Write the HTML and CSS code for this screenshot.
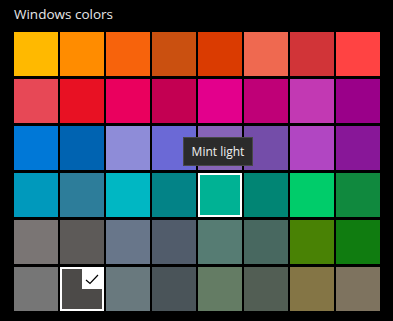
FILE: index.html
```html
<!DOCTYPE html>
<html lang="en">
<head>
<meta charset="UTF-8" />
<title>Windows colors</title>
<link rel="stylesheet" href="styles.css">
</head>
<body>
  <div class="panel">
    <h2 class="title">Windows colors</h2>
    <div class="swatches">
      <div class="swatch" style="background:#FFB900"></div>
      <div class="swatch" style="background:#FF8C00"></div>
      <div class="swatch" style="background:#F7630C"></div>
      <div class="swatch" style="background:#CA5010"></div>
      <div class="swatch" style="background:#DA3B01"></div>
      <div class="swatch" style="background:#EF6950"></div>
      <div class="swatch" style="background:#D13438"></div>
      <div class="swatch" style="background:#FF4343"></div>

      <div class="swatch" style="background:#E74856"></div>
      <div class="swatch" style="background:#E81123"></div>
      <div class="swatch" style="background:#EA005E"></div>
      <div class="swatch" style="background:#C30052"></div>
      <div class="swatch" style="background:#E3008C"></div>
      <div class="swatch" style="background:#BF0077"></div>
      <div class="swatch" style="background:#C239B3"></div>
      <div class="swatch" style="background:#9A0089"></div>

      <div class="swatch" style="background:#0078D7"></div>
      <div class="swatch" style="background:#0063B1"></div>
      <div class="swatch" style="background:#8E8CD8"></div>
      <div class="swatch" style="background:#6B69D6"></div>
      <div class="swatch" style="background:#8764B8"></div>
      <div class="swatch" style="background:#744DA9"></div>
      <div class="swatch" style="background:#B146C2"></div>
      <div class="swatch" style="background:#881798"></div>

      <div class="swatch" style="background:#0099BC"></div>
      <div class="swatch" style="background:#2D7D9A"></div>
      <div class="swatch" style="background:#00B7C3"></div>
      <div class="swatch" style="background:#038387"></div>
      <div class="swatch hovered" style="background:#00B294">
        <div class="tooltip">Mint light</div>
      </div>
      <div class="swatch" style="background:#018574"></div>
      <div class="swatch" style="background:#00CC6A"></div>
      <div class="swatch" style="background:#10893E"></div>

      <div class="swatch" style="background:#7A7574"></div>
      <div class="swatch" style="background:#5D5A58"></div>
      <div class="swatch" style="background:#68768A"></div>
      <div class="swatch" style="background:#515C6B"></div>
      <div class="swatch" style="background:#567C73"></div>
      <div class="swatch" style="background:#486860"></div>
      <div class="swatch" style="background:#498205"></div>
      <div class="swatch" style="background:#107C10"></div>

      <div class="swatch" style="background:#767676"></div>
      <div class="swatch selected" style="background:#4C4A48">
        <span class="check">
          <svg width="20" height="20" viewBox="0 0 20 20"><path d="M4 11 L8 14.5 L16 6" fill="none" stroke="#000" stroke-width="1.2"/></svg>
        </span>
      </div>
      <div class="swatch" style="background:#69797E"></div>
      <div class="swatch" style="background:#4A5459"></div>
      <div class="swatch" style="background:#647C64"></div>
      <div class="swatch" style="background:#525E54"></div>
      <div class="swatch" style="background:#847545"></div>
      <div class="swatch" style="background:#7E735F"></div>
    </div>
  </div>
</body>
</html>
```

FILE: styles.css
```css
html, body {
  margin: 0;
  padding: 0;
  background: #000;
}
.panel {
  padding: 4px 14px 0 14px;
  font-family: "Open Sans", "Noto Sans", sans-serif;
  color: #e8e8e8;
}
.title {
  margin: 0;
  height: 28px;
  font-size: 13.5px;
  font-weight: normal;
  line-height: 20px;
}
.swatches {
  display: grid;
  grid-template-columns: repeat(8, 44px);
  grid-auto-rows: 44px;
  column-gap: 2px;
  row-gap: 3px;
}
.swatch {
  position: relative;
}
.hovered,
.selected {
  box-shadow: inset 0 0 0 2px #fff;
}
.tooltip {
  position: absolute;
  left: -15px;
  top: -36px;
  width: 70px;
  height: 29px;
  box-sizing: border-box;
  background: #2b2b2b;
  border: 1px solid #484848;
  color: #f0f0f0;
  font-size: 12px;
  line-height: 27px;
  text-align: center;
  white-space: nowrap;
  z-index: 2;
}
.check {
  position: absolute;
  top: 2px;
  right: 2px;
  width: 20px;
  height: 20px;
  background: #fff;
}
.check svg {
  display: block;
}
```
